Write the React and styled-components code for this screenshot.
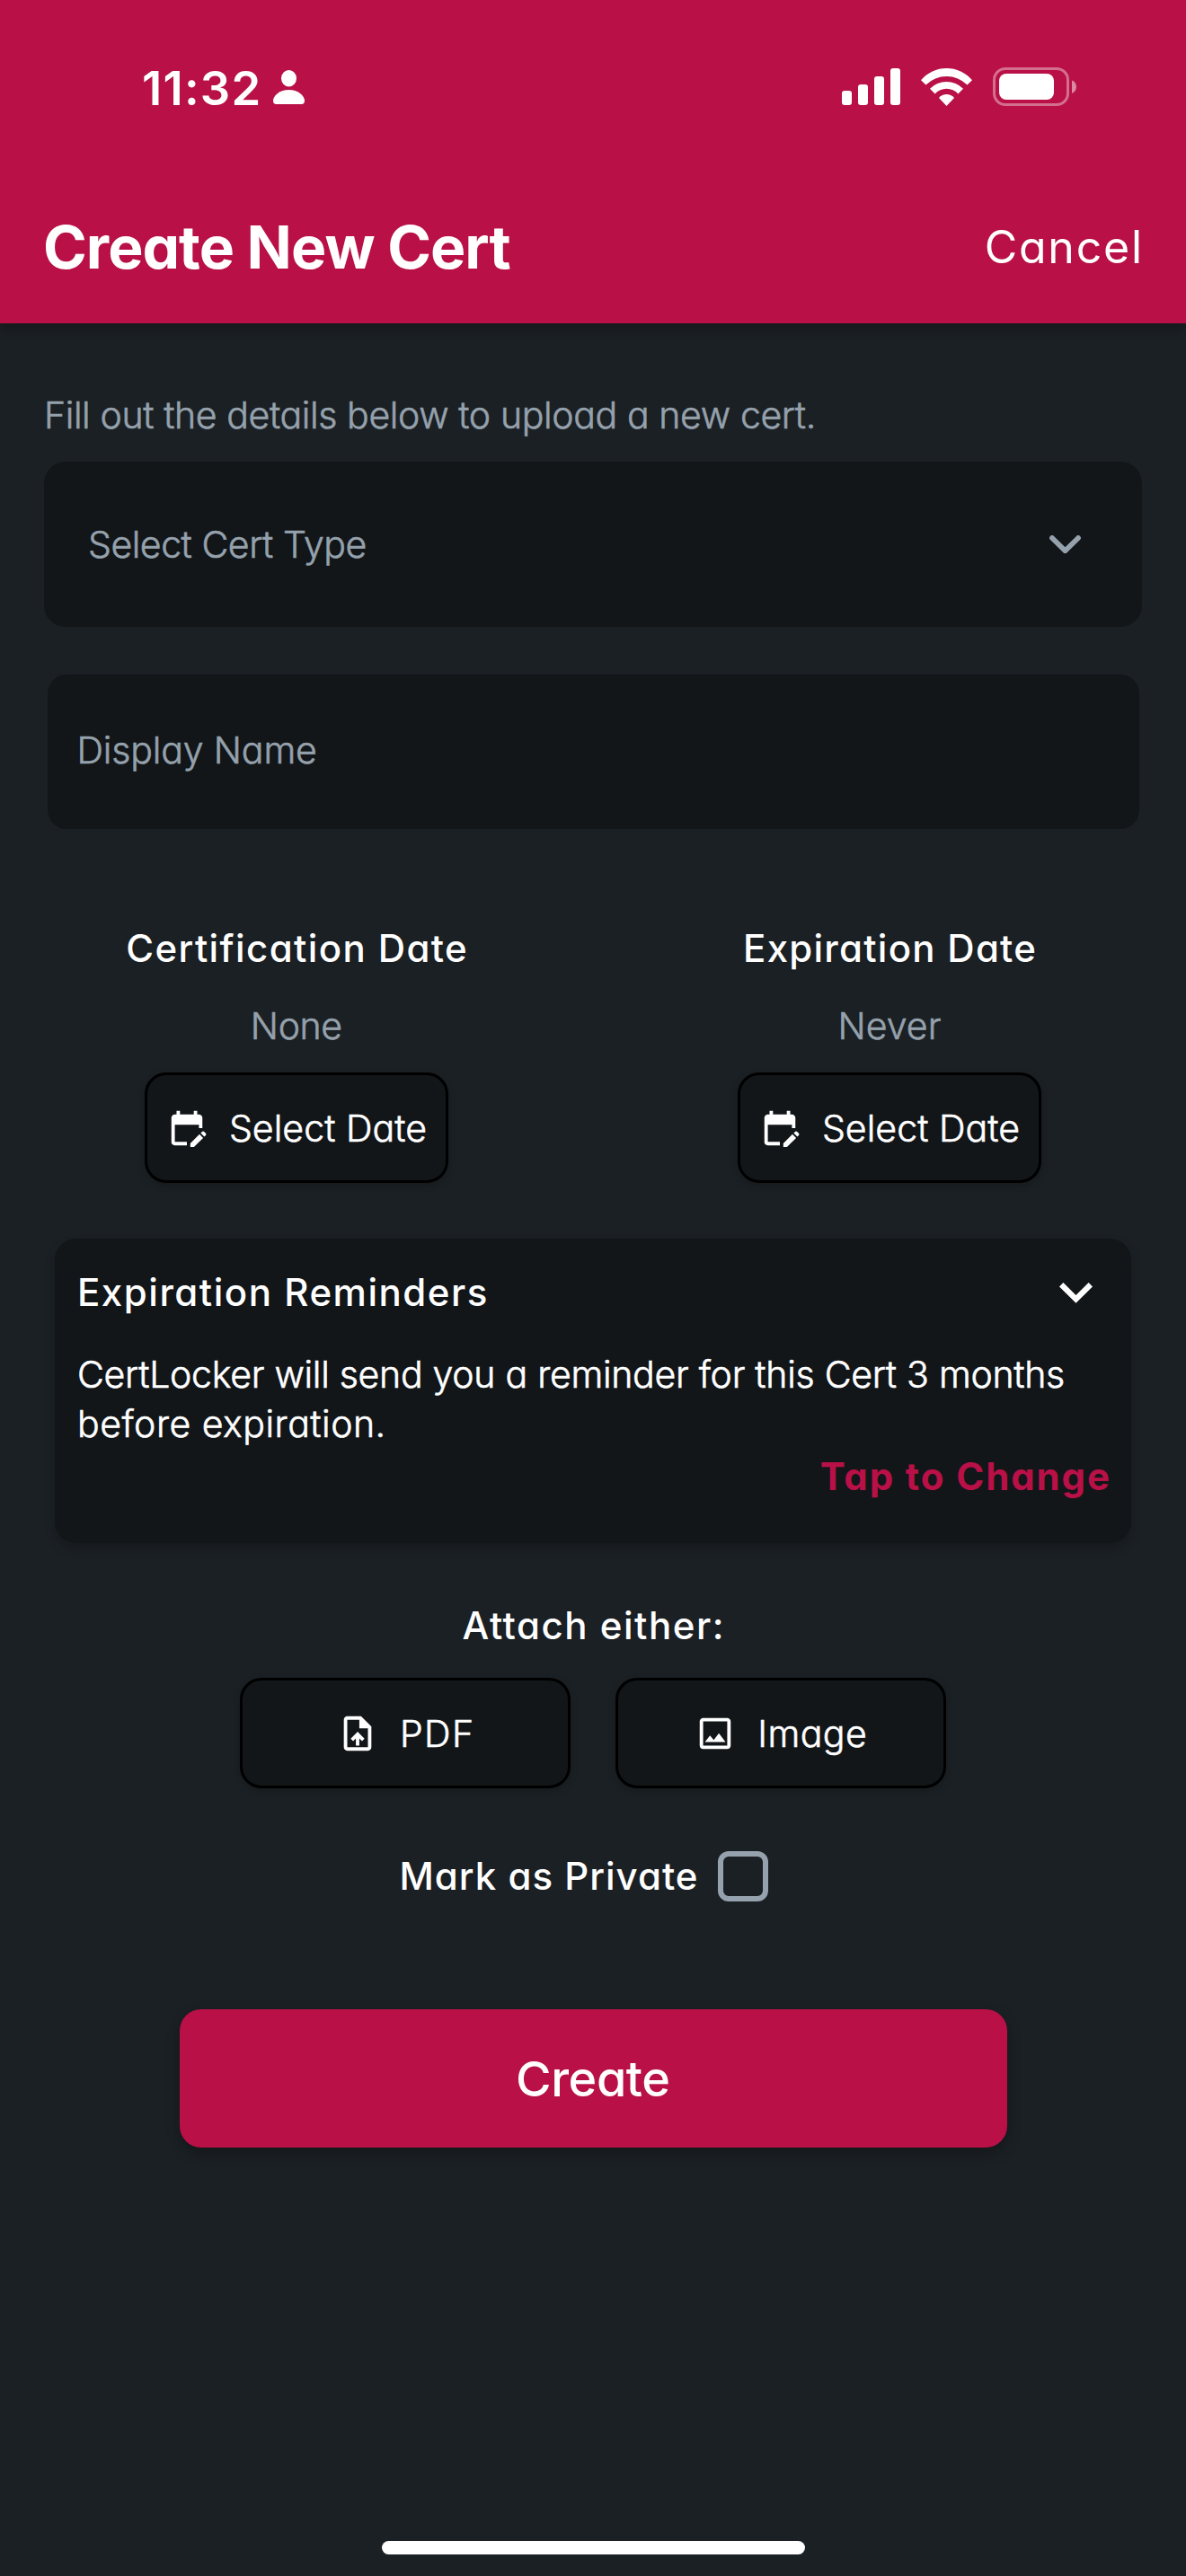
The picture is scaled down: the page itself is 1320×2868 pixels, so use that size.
import React from "react";
import styled, { createGlobalStyle } from "styled-components";
import { MdEditCalendar, MdUploadFile, MdOutlineImage } from "react-icons/md";

const color = {
  accent: "#b81047",
  page: "#1b2024",
  field: "#121619",
  muted: "#95a1ac",
  white: "#ffffff",
};

const Global = createGlobalStyle`
  * { box-sizing: border-box; }
  body {
    margin: 0;
    background: ${color.page};
    color: ${color.white};
    font-family: "Inter", "Liberation Sans", sans-serif;
    font-feature-settings: "cv11";
  }
`;

const Screen = styled.div`
  width: 1320px;
  height: 2868px;
  display: flex;
  flex-direction: column;
  background: ${color.page};
  overflow: hidden;
`;

const Header = styled.header`
  flex: none;
  height: 360px;
  background: ${color.accent};
  box-shadow: 0 6px 12px rgba(0, 0, 0, 0.25);
`;

const StatusBar = styled.div`
  height: 189px;
  padding: 4px 122px 0 158px;
  display: flex;
  align-items: center;
  justify-content: space-between;
`;

const StatusGroup = styled.div`
  display: flex;
  align-items: center;
  gap: ${(p) => p.$gap}px;
`;

const TitleBar = styled.div`
  height: 171px;
  padding: 0 49px 0 48px;
  display: flex;
  align-items: center;
  justify-content: space-between;
`;

/* Negative end margin drops the tracking after the last letter. */
const Text = styled.span`
  margin-right: ${(p) => -(p.$track || 0)}px;
  letter-spacing: ${(p) => p.$track || 0}px;
  font-size: 41px;
  line-height: 50px;
  white-space: nowrap;
`;

const Clock = styled(Text)`
  font-size: 52.5px;
  font-weight: 600;
  line-height: 60px;
  padding-top: 3px;
`;

const Title = styled(Text).attrs({ as: "h1" })`
  margin-top: 0;
  margin-bottom: 0;
  font-size: 66px;
  font-weight: 700;
  line-height: 80px;
`;

const CancelLink = styled(Text)`
  font-size: 50px;
  line-height: 60px;
`;

const Label = styled(Text)`
  font-size: 42px;
  font-weight: 500;
`;

/* A hairline stroke brings the light face up to a book weight. */
const Body = styled(Text)`
  font-weight: 300;
  color: ${(p) => (p.$muted ? color.muted : color.white)};
  -webkit-text-stroke: 0.6px currentColor;
`;

const Form = styled.main`
  flex: 1;
  padding: 80px 0 24px;
  display: flex;
  flex-direction: column;
  align-items: center;
`;

const Intro = styled.div`
  align-self: stretch;
  height: 44px;
  margin-bottom: 30px;
  padding-left: 49px;
  display: flex;
  align-items: center;
`;

const SelectField = styled.div`
  width: 1222px;
  height: 184px;
  padding: 0 68px 0 49px;
  display: flex;
  align-items: center;
  justify-content: space-between;
  border-radius: 24px;
  background: ${color.field};
`;

const InputField = styled.div`
  width: 1215px;
  height: 172px;
  margin-top: 53px;
  padding: 0 33px 5px;
  display: flex;
  align-items: center;
  border-radius: 21px;
  background: ${color.field};
`;

const Dates = styled.section`
  width: 100%;
  margin-top: 108px;
  display: grid;
  grid-template-columns: 1fr 1fr;
`;

const DateColumn = styled.div`
  display: flex;
  flex-direction: column;
  align-items: center;
`;

const DateValue = styled.div`
  height: 50px;
  margin: 36px 0 27px;
  display: flex;
`;

const OutlineButton = styled.button`
  width: ${(p) => p.$width}px;
  height: 123px;
  padding: 0;
  display: flex;
  align-items: center;
  justify-content: center;
  gap: 24px;
  border: 3px solid #000;
  border-radius: 24px;
  background: ${color.field};
  color: ${color.white};
  font-family: inherit;
  font-feature-settings: inherit;
  box-shadow: 0 3px 9px rgba(0, 0, 0, 0.2);
  svg { width: 46px; height: 46px; flex: none; }
`;

const ReminderCard = styled.section`
  width: 1198px;
  height: 339px;
  margin-top: 62px;
  padding: 35px 24px 0 25px;
  display: flex;
  flex-direction: column;
  border-radius: 24px;
  background: ${color.field};
  box-shadow: 0 6px 12px rgba(0, 0, 0, 0.2);
`;

const ReminderHead = styled.div`
  height: 50px;
  padding-right: 19px;
  display: flex;
  align-items: center;
  justify-content: space-between;
`;

const ReminderText = styled.div`
  margin-top: 39px;
  display: flex;
  flex-direction: column;
  align-items: flex-start;
`;

const ReminderLine = styled(Body)`
  line-height: 55.3px;
`;

const ChangeLink = styled(Text)`
  align-self: flex-end;
  margin-top: 5px;
  font-size: 42px;
  font-weight: 700;
  color: ${color.accent};
`;

const Attach = styled.section`
  margin-top: 67px;
  display: flex;
  flex-direction: column;
  align-items: center;
  gap: 33px;
`;

const AttachButtons = styled.div`
  display: flex;
  gap: 50px;
`;

const PrivateRow = styled.label`
  height: 56px;
  margin-top: 70px;
  padding-right: 21px;
  display: flex;
  align-items: center;
  gap: 22px;
`;

const Checkbox = styled.span`
  width: 56px;
  height: 56px;
  border: 6px solid ${color.muted};
  border-radius: 12px;
`;

const CreateButton = styled.button`
  width: 921px;
  height: 154px;
  margin-top: 120px;
  padding: 2px 0 0;
  border: 0;
  border-radius: 24px;
  background: ${color.accent};
  color: ${color.white};
  font-family: inherit;
  font-feature-settings: inherit;
  box-shadow: 0 6px 15px rgba(0, 0, 0, 0.3);
`;

const CreateLabel = styled(Text)`
  font-size: 54px;
  font-weight: 500;
  line-height: 66px;
`;

const HomeIndicator = styled.div`
  width: 471px;
  height: 15px;
  margin-top: auto;
  border-radius: 8px;
  background: ${color.white};
`;

const PersonIcon = () => (
  <svg width="35" height="38" viewBox="0 0 35 38" fill="#fff">
    <ellipse cx="17.5" cy="9.2" rx="8.5" ry="9.2" />
    <path d="M17.5 22C27.5 22 35 28.5 35 34.3c0 2.3-1.2 3.7-3.2 3.7H3.2C1.2 38 0 36.6 0 34.3 0 28.5 7.5 22 17.5 22z" />
  </svg>
);

const SignalIcon = () => (
  <svg width="65" height="41" viewBox="0 0 65 41" fill="#fff">
    <rect x="0" y="25" width="11" height="16" rx="3" />
    <rect x="18" y="18" width="11" height="23" rx="3" />
    <rect x="36" y="9" width="11" height="32" rx="3" />
    <rect x="54" y="0" width="11" height="41" rx="3" />
  </svg>
);

const WifiIcon = () => (
  <svg width="57" height="42" viewBox="0 0 57 42" fill="#fff">
    <path d="M0 13.3A37.2 37.2 0 0 1 57 13.3L51.5 18.6A32.6 32.6 0 0 0 5.5 18.6Z" />
    <path d="M10 22.7A26 26 0 0 1 47 22.7L41.4 28.6A17 17 0 0 0 15.6 28.6Z" />
    <path d="M20 33A11 11 0 0 1 37 33L28.5 42Z" />
  </svg>
);

const BatteryIcon = () => (
  <svg width="93" height="43" viewBox="0 0 93 43" fill="#fff">
    <rect x="1.5" y="1.5" width="82" height="40" rx="12.5" fill="none" stroke="#fff" strokeOpacity="0.4" strokeWidth="3" />
    <rect x="7" y="7" width="61" height="29" rx="8" />
    <path d="M88 14.5c3 1 5 4 5 7.200s-2 6.200-5 7.200z" fillOpacity="0.5" />
  </svg>
);

const SoftChevron = () => (
  <svg width="35" height="20" viewBox="0 0 35 20" fill="none" stroke={color.muted} strokeWidth="5.8" strokeLinecap="round" strokeLinejoin="round">
    <path d="M3 3L17.5 17.2L32 3" />
  </svg>
);

const SharpChevron = () => (
  <svg width="37" height="23" viewBox="0 0 37 23" fill="#fff">
    <path d="M4.4 0L18.5 14 32.6 0 37 4.4 18.5 22.8 0 4.4z" />
  </svg>
);

function DateField({ label, labelTrack, value, valueTrack }) {
  return (
    <DateColumn>
      <Label $track={labelTrack}>{label}</Label>
      <DateValue>
        <Body $muted $track={valueTrack}>{value}</Body>
      </DateValue>
      <OutlineButton $width={338}>
        <MdEditCalendar />
        <Body $track={0.07}>Select Date</Body>
      </OutlineButton>
    </DateColumn>
  );
}

export default function App() {
  return (
    <Screen>
      <Global />
      <Header>
        <StatusBar>
          <StatusGroup $gap={14}>
            <Clock $track={1.24}>11:32</Clock>
            <PersonIcon />
          </StatusGroup>
          <StatusGroup $gap={23}>
            <SignalIcon />
            <WifiIcon />
            <BatteryIcon />
          </StatusGroup>
        </StatusBar>
        <TitleBar>
          <Title $track={-0.98}>Create New Cert</Title>
          <CancelLink $track={1.75}>Cancel</CancelLink>
        </TitleBar>
      </Header>
      <Form>
        <Intro>
          <Body $muted $track={-0.38}>Fill out the details below to upload a new cert.</Body>
        </Intro>
        <SelectField>
          <Body $muted $track={-0.46}>Select Cert Type</Body>
          <SoftChevron />
        </SelectField>
        <InputField>
          <Body $muted $track={-0.14}>Display Name</Body>
        </InputField>
        <Dates>
          <DateField label="Certification Date" labelTrack={1.4} value="None" valueTrack={-0.35} />
          <DateField label="Expiration Date" labelTrack={1.26} value="Never" valueTrack={0.04} />
        </Dates>
        <ReminderCard>
          <ReminderHead>
            <Label $track={1.53}>Expiration Reminders</Label>
            <SharpChevron />
          </ReminderHead>
          <ReminderText>
            <ReminderLine $track={-0.27}>CertLocker will send you a reminder for this Cert 3 months</ReminderLine>
            <ReminderLine $track={0.5}>before expiration.</ReminderLine>
          </ReminderText>
          <ChangeLink $track={1.88}>Tap to Change</ChangeLink>
        </ReminderCard>
        <Attach>
          <Label $track={1.53}>Attach either:</Label>
          <AttachButtons>
            <OutlineButton $width={368}>
              <MdUploadFile />
              <Body $track={1.4}>PDF</Body>
            </OutlineButton>
            <OutlineButton $width={368}>
              <MdOutlineImage />
              <Body $track={0.5}>Image</Body>
            </OutlineButton>
          </AttachButtons>
        </Attach>
        <PrivateRow>
          <Label $track={1.02}>Mark as Private</Label>
          <Checkbox />
        </PrivateRow>
        <CreateButton>
          <CreateLabel $track={-0.45}>Create</CreateLabel>
        </CreateButton>
        <HomeIndicator />
      </Form>
    </Screen>
  );
}
